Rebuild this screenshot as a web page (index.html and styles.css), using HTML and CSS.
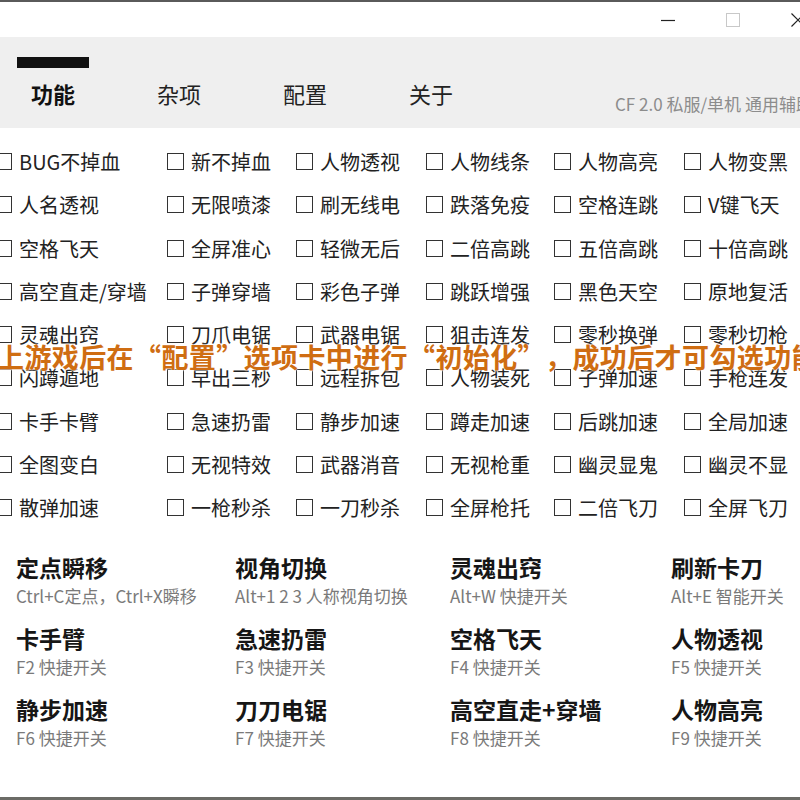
FILE: index.html
```html
<!DOCTYPE html>
<html lang="zh-CN">
<head>
    <meta charset="UTF-8">
    <meta name="viewport" content="width=device-width, initial-scale=1.0">
    <title>CF 2.0 通用辅助</title>
    <link rel="stylesheet" href="styles.css">
</head>
<body>
    <div class="window">
        <div class="titlebar">
            <span class="win-btn">
                <svg width="14" height="14" viewBox="0 0 14 14"><line x1="0" y1="7.5" x2="14" y2="7.5" stroke="#222" stroke-width="1.2"/></svg>
            </span>
            <span class="win-btn">
                <svg width="14" height="14" viewBox="0 0 14 14"><rect x="0.5" y="0.5" width="13" height="13" fill="none" stroke="#c8c8c8" stroke-width="1"/></svg>
            </span>
            <span class="win-btn">
                <svg width="14" height="14" viewBox="0 0 14 14"><path d="M0.5 0.5 L13.5 13.5 M13.5 0.5 L0.5 13.5" stroke="#222" stroke-width="1.2"/></svg>
            </span>
        </div>

        <div class="header">
            <div class="tabs">
                <span class="tab active">功能</span>
                <span class="tab">杂项</span>
                <span class="tab">配置</span>
                <span class="tab">关于</span>
            </div>
            <span class="subtitle">CF 2.0 私服/单机 通用辅助</span>
        </div>

        <div class="features">
            <div class="grid">
                <label class="option"><input type="checkbox"><span>BUG不掉血</span></label>
                <label class="option"><input type="checkbox"><span>新不掉血</span></label>
                <label class="option"><input type="checkbox"><span>人物透视</span></label>
                <label class="option"><input type="checkbox"><span>人物线条</span></label>
                <label class="option"><input type="checkbox"><span>人物高亮</span></label>
                <label class="option"><input type="checkbox"><span>人物变黑</span></label>

                <label class="option"><input type="checkbox"><span>人名透视</span></label>
                <label class="option"><input type="checkbox"><span>无限喷漆</span></label>
                <label class="option"><input type="checkbox"><span>刷无线电</span></label>
                <label class="option"><input type="checkbox"><span>跌落免疫</span></label>
                <label class="option"><input type="checkbox"><span>空格连跳</span></label>
                <label class="option"><input type="checkbox"><span>V键飞天</span></label>

                <label class="option"><input type="checkbox"><span>空格飞天</span></label>
                <label class="option"><input type="checkbox"><span>全屏准心</span></label>
                <label class="option"><input type="checkbox"><span>轻微无后</span></label>
                <label class="option"><input type="checkbox"><span>二倍高跳</span></label>
                <label class="option"><input type="checkbox"><span>五倍高跳</span></label>
                <label class="option"><input type="checkbox"><span>十倍高跳</span></label>

                <label class="option"><input type="checkbox"><span>高空直走/穿墙</span></label>
                <label class="option"><input type="checkbox"><span>子弹穿墙</span></label>
                <label class="option"><input type="checkbox"><span>彩色子弹</span></label>
                <label class="option"><input type="checkbox"><span>跳跃增强</span></label>
                <label class="option"><input type="checkbox"><span>黑色天空</span></label>
                <label class="option"><input type="checkbox"><span>原地复活</span></label>

                <label class="option"><input type="checkbox"><span>灵魂出窍</span></label>
                <label class="option"><input type="checkbox"><span>刀爪电锯</span></label>
                <label class="option"><input type="checkbox"><span>武器电锯</span></label>
                <label class="option"><input type="checkbox"><span>狙击连发</span></label>
                <label class="option"><input type="checkbox"><span>零秒换弹</span></label>
                <label class="option"><input type="checkbox"><span>零秒切枪</span></label>

                <label class="option"><input type="checkbox"><span>闪蹲遁地</span></label>
                <label class="option"><input type="checkbox"><span>早出三秒</span></label>
                <label class="option"><input type="checkbox"><span>远程拆包</span></label>
                <label class="option"><input type="checkbox"><span>人物装死</span></label>
                <label class="option"><input type="checkbox"><span>子弹加速</span></label>
                <label class="option"><input type="checkbox"><span>手枪连发</span></label>

                <label class="option"><input type="checkbox"><span>卡手卡臂</span></label>
                <label class="option"><input type="checkbox"><span>急速扔雷</span></label>
                <label class="option"><input type="checkbox"><span>静步加速</span></label>
                <label class="option"><input type="checkbox"><span>蹲走加速</span></label>
                <label class="option"><input type="checkbox"><span>后跳加速</span></label>
                <label class="option"><input type="checkbox"><span>全局加速</span></label>

                <label class="option"><input type="checkbox"><span>全图变白</span></label>
                <label class="option"><input type="checkbox"><span>无视特效</span></label>
                <label class="option"><input type="checkbox"><span>武器消音</span></label>
                <label class="option"><input type="checkbox"><span>无视枪重</span></label>
                <label class="option"><input type="checkbox"><span>幽灵显鬼</span></label>
                <label class="option"><input type="checkbox"><span>幽灵不显</span></label>

                <label class="option"><input type="checkbox"><span>散弹加速</span></label>
                <label class="option"><input type="checkbox"><span>一枪秒杀</span></label>
                <label class="option"><input type="checkbox"><span>一刀秒杀</span></label>
                <label class="option"><input type="checkbox"><span>全屏枪托</span></label>
                <label class="option"><input type="checkbox"><span>二倍飞刀</span></label>
                <label class="option"><input type="checkbox"><span>全屏飞刀</span></label>
            </div>
            <p class="notice">上游戏后在“配置”选项卡中进行“初始化”，成功后才可勾选功能</p>
        </div>

        <div class="shortcuts">
            <div class="hotkey"><h3>定点瞬移</h3><p>Ctrl+C定点，Ctrl+X瞬移</p></div>
            <div class="hotkey"><h3>视角切换</h3><p>Alt+1 2 3 人称视角切换</p></div>
            <div class="hotkey"><h3>灵魂出窍</h3><p>Alt+W 快捷开关</p></div>
            <div class="hotkey"><h3>刷新卡刀</h3><p>Alt+E 智能开关</p></div>

            <div class="hotkey"><h3>卡手臂</h3><p>F2 快捷开关</p></div>
            <div class="hotkey"><h3>急速扔雷</h3><p>F3 快捷开关</p></div>
            <div class="hotkey"><h3>空格飞天</h3><p>F4 快捷开关</p></div>
            <div class="hotkey"><h3>人物透视</h3><p>F5 快捷开关</p></div>

            <div class="hotkey"><h3>静步加速</h3><p>F6 快捷开关</p></div>
            <div class="hotkey"><h3>刀刀电锯</h3><p>F7 快捷开关</p></div>
            <div class="hotkey"><h3>高空直走+穿墙</h3><p>F8 快捷开关</p></div>
            <div class="hotkey"><h3>人物高亮</h3><p>F9 快捷开关</p></div>
        </div>
    </div>
</body>
</html>
```

FILE: styles.css
```css
* {
    padding: 0;
    margin: 0;
    box-sizing: border-box;
    font-family: "Noto Sans CJK SC", "Noto Sans", sans-serif;
}
body {
    width: 800px;
    height: 800px;
    overflow: hidden;
    background: #fff;
}
.window {
    height: 800px;
    border-top: 2px solid #5a5a5a;
    border-bottom: 3px solid #6b6b66;
    overflow: hidden;
    position: relative;
}
.titlebar {
    height: 35px;
    display: flex;
    justify-content: flex-end;
    align-items: center;
    margin-right: -30px;
    background: #fff;
}
.win-btn {
    width: 65px;
    height: 35px;
    display: flex;
    align-items: center;
    justify-content: center;
}
.header {
    height: 91px;
    background: #efefef;
    display: flex;
    overflow: hidden;
}
.tabs {
    display: flex;
    gap: 54px;
    padding: 20px 0 0 17px;
}
.tab {
    width: 72px;
    text-align: center;
    border-top: 11px solid transparent;
    padding-top: 10px;
    font-size: 22px;
    line-height: 30px;
    color: #222;
}
.tab.active {
    border-top-color: #111;
    color: #111;
    font-weight: bold;
}
.subtitle {
    margin: 56px 0 0 148px;
    font-size: 17px;
    line-height: 22px;
    color: #8c8c8c;
    white-space: nowrap;
}
.features {
    position: relative;
    padding-top: 12px;
}
.grid {
    display: grid;
    grid-template-columns: 172px 129px 130px 128px 130px 1fr;
    grid-auto-rows: 43.25px;
    margin-left: -5px;
}
.option {
    display: flex;
    align-items: center;
    gap: 7px;
    font-size: 20px;
    color: #222;
    white-space: nowrap;
}
.option input {
    appearance: none;
    -webkit-appearance: none;
    width: 17px;
    height: 17px;
    border: 1.5px solid #333;
    background: #fff;
    flex-shrink: 0;
}
.notice {
    position: absolute;
    top: 214px;
    left: -3px;
    white-space: nowrap;
    font-size: 27px;
    line-height: 30px;
    font-weight: bold;
    color: #cf6d12;
    letter-spacing: 0.4px;
    text-spacing-trim: space-all;
    text-shadow: 0 0 2px #fff, 0 0 2px #fff;
}
.shortcuts {
    display: grid;
    grid-template-columns: 219px 215px 221px 1fr;
    row-gap: 18px;
    padding: 24px 0 0 16px;
}
.hotkey h3 {
    font-size: 23px;
    line-height: 28px;
    font-weight: bold;
    color: #161616;
    white-space: nowrap;
}
.hotkey p {
    margin-top: 4px;
    font-size: 17px;
    line-height: 21px;
    color: #7a7a7a;
    white-space: nowrap;
}
```
